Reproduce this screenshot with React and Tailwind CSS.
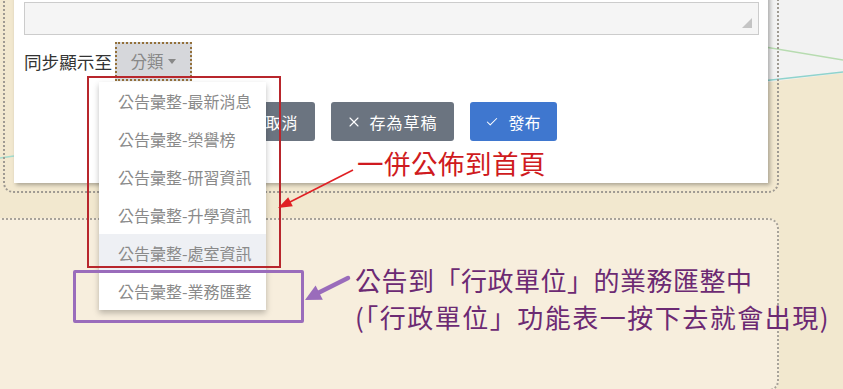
import React from 'react';
import { Check, X, RotateCcw } from 'lucide-react';

const items = [
  '公告彙整-最新消息',
  '公告彙整-榮譽榜',
  '公告彙整-研習資訊',
  '公告彙整-升學資訊',
  '公告彙整-處室資訊',
  '公告彙整-業務匯整',
];

export default function App() {
  return (
    <div className="relative w-[843px] h-[389px] overflow-hidden bg-[#f2e8cf] font-['Noto_Sans_CJK_TC',sans-serif]">
      {/* background decoration */}
      <svg className="absolute inset-0 pointer-events-none" width="843" height="389">
        <polygon points="700,0 843,0 843,73 700,90" fill="#f2f2f2" />
        <line x1="700" y1="36" x2="843" y2="60" stroke="#b7dcb0" strokeWidth="1.5" />
        <line x1="700" y1="88" x2="843" y2="72" stroke="#8fd3cd" strokeWidth="1.5" />
        <line x1="0" y1="158" x2="14" y2="156" stroke="#a3dccf" strokeWidth="1.5" />
      </svg>

      <div className="relative flex flex-col">
        {/* first card */}
        <div className="-mt-[40px] ml-[3px] w-[776px] border-2 border-dotted border-[#9f9a92] rounded-b-[10px] pt-[8px] pl-[9px] pr-[9px] pb-[8px]">
          <div className="relative bg-white shadow-[2px_2px_4px_rgba(0,0,0,0.3)] pt-[32px] pl-[10px] pr-[9px] pb-[42px]">
            <div className="relative h-[33px] border border-[#cccccc] bg-[#f5f5f5]">
              <div className="absolute right-[6px] bottom-[6px] w-0 h-0 border-l-[10px] border-l-transparent border-b-[10px] border-b-[#c4c4c4]" />
            </div>

            <div className="mt-[7px] flex items-center h-[39px]">
              <span className="text-[17.6px] text-[#333333] leading-none">同步顯示至</span>
              <div className="relative ml-[3px]">
                <button className="h-[39px] w-[77px] border-2 border-dotted border-[#93703a] bg-[#d6d7db] flex items-center justify-center gap-[5px] text-[#888888] text-[16.5px]">
                  分類
                  <span className="w-0 h-0 border-x-4 border-x-transparent border-t-[5px] border-t-[#888888]" />
                </button>
                <div className="absolute z-20 top-[40px] -left-[16px] w-[167px] bg-white shadow-[0_3px_6px_rgba(0,0,0,0.25)]">
                  {items.map((item, i) => (
                    <div
                      key={item}
                      className={`h-[38px] flex items-center pl-[19px] text-[16px] text-[#8a8a8a] whitespace-nowrap ${i === 4 ? 'bg-[#eef0f4]' : ''}`}
                    >
                      {item}
                    </div>
                  ))}
                </div>
              </div>
            </div>

            <div className="mt-[21px] flex justify-center gap-4">
              <button className="h-[39px] w-[88px] rounded-[3px] bg-[#6b7480] text-white text-[16px] flex items-center justify-center gap-[10px]">
                <RotateCcw className="w-[12px] h-[12px]" strokeWidth={2} />
                取消
              </button>
              <button className="h-[39px] w-[123px] rounded-[3px] bg-[#6b7480] text-white text-[16px] tracking-[1px] flex items-center justify-center gap-[7px]">
                <X className="w-[16px] h-[16px]" strokeWidth={1.6} />
                存為草稿
              </button>
              <button className="h-[39px] w-[87px] rounded-[3px] bg-[#3f77cf] text-white text-[16px] flex items-center justify-center gap-[9px]">
                <Check className="w-[14px] h-[14px]" strokeWidth={1.8} />
                發布
              </button>
            </div>
          </div>
        </div>

        {/* second card */}
        <div className="mt-[25px] -ml-[20px] w-[799px] h-[173px] border-2 border-dotted border-[#a8a39a] rounded-[10px] bg-[#f7eedd]" />
      </div>

      {/* annotations */}
      <div className="absolute z-30 left-[87px] top-[76px] w-[194px] h-[192px] border-2 border-[#b8262c]" />
      <div className="absolute z-30 left-[73px] top-[270px] w-[231px] h-[53px] border-[3px] border-[#9a6cbb] rounded-[2px]" />

      <div className="absolute z-30 left-[357px] top-[148px] text-[26.5px] leading-[30px] tracking-[0.5px] text-[#cf1a20] whitespace-nowrap">
        一併公佈到首頁
      </div>

      <div className="absolute z-30 left-[355px] top-[261px] text-[26px] leading-[37px] tracking-[0.5px] text-[#6c2a73] whitespace-nowrap">
        <div>公告到「行政單位」的業務匯整中</div>
        <div className="tracking-[1.5px]">(「行政單位」功能表一按下去就會出現)</div>
      </div>

      <svg className="absolute inset-0 z-40 pointer-events-none" width="843" height="389">
        <line x1="353" y1="170" x2="288" y2="203" stroke="#e02024" strokeWidth="1.6" />
        <polygon points="278,208 292.8,206.2 288.2,197.2" fill="#e02024" />
        <line x1="348" y1="278" x2="318" y2="293" stroke="#9a6cbb" strokeWidth="4.5" strokeLinecap="round" />
        <polygon points="305,300 322.8,299.8 315.6,285.6" fill="#9a6cbb" />
      </svg>
    </div>
  );
}
